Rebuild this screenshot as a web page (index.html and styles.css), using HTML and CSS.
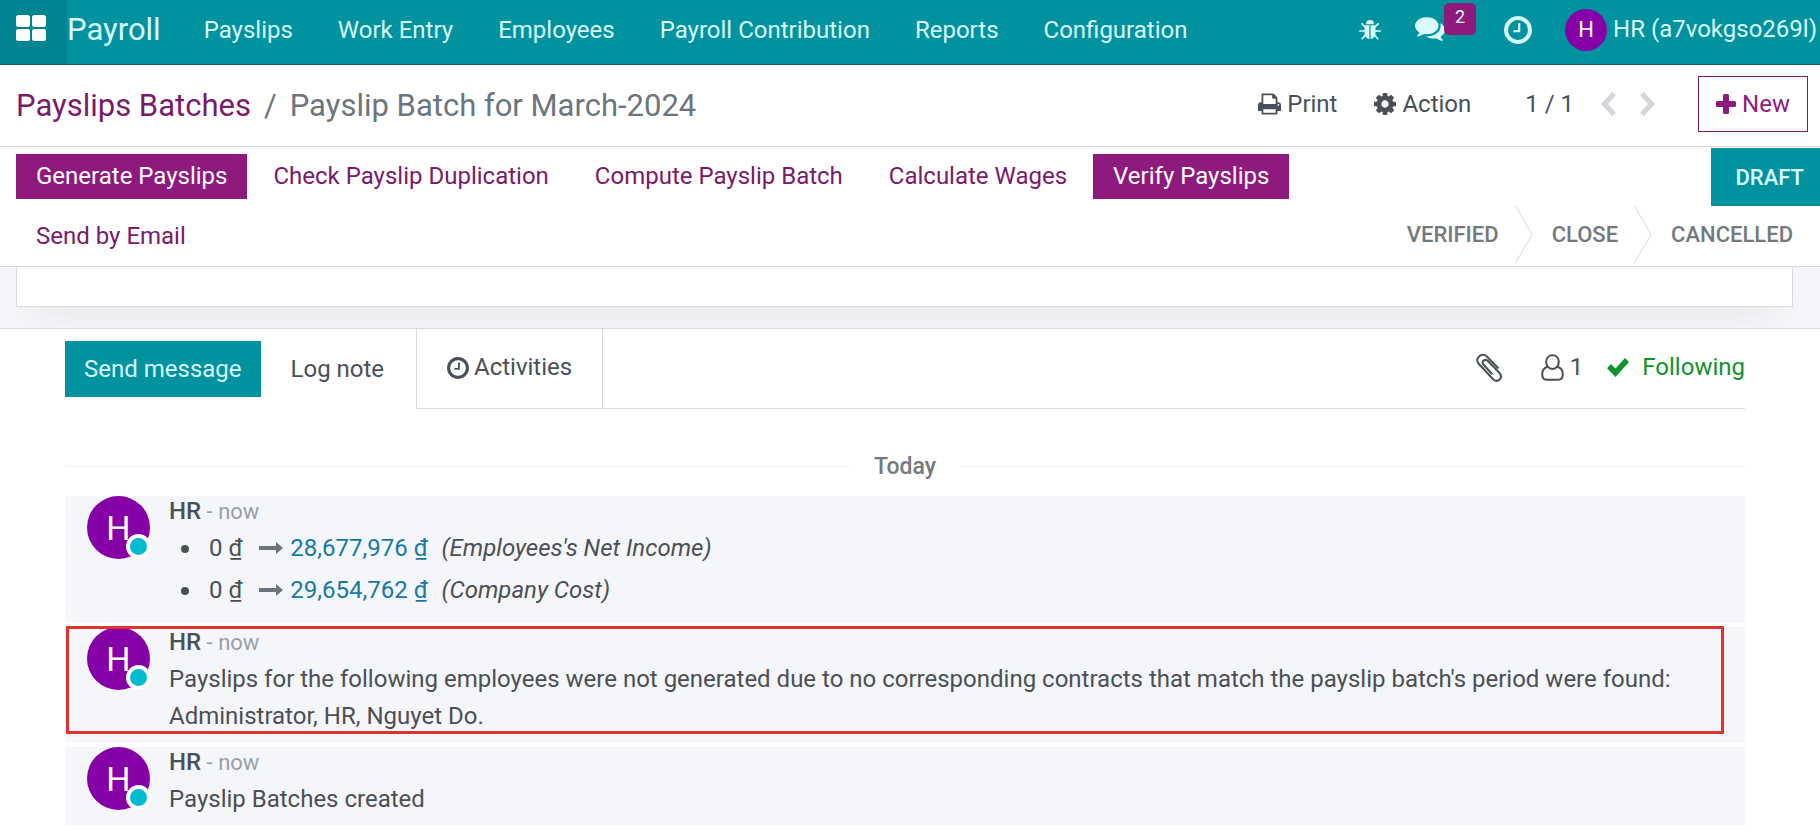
FILE: index.html
```html
<!DOCTYPE html>
<html lang="en">
<head>
<meta charset="utf-8">
<title>Payslip Batch for March-2024</title>
<link rel="stylesheet" href="styles.css">
</head>
<body>
<svg class="sprite" aria-hidden="true">
  <symbol id="i-clock" viewBox="0 0 1536 1536"><path d="M896 416v448q0 14-9 23t-23 9H544q-14 0-23-9t-9-23v-64q0-14 9-23t23-9h224V416q0-14 9-23t23-9h64q14 0 23 9t9 23zm416 352q0-148-73-273t-198-198-273-73-273 73-198 198-73 273 73 273 198 198 273 73 273-73 198-198 73-273zm224 0q0 209-103 385.500T1153.500 1433 768 1536t-385.500-103T103 1153.500 0 768t103-385.500T382.500 103 768 0t385.500 103T1433 382.500 1536 768z"/></symbol>
</svg>
<header class="navbar">
  <button class="apps" aria-label="Home menu"><svg viewBox="0 0 30 26" width="30" height="26"><rect width="14" height="12" rx="2.500"/><rect x="16" width="14" height="12" rx="2.500"/><rect y="14" width="14" height="12" rx="2.500"/><rect x="16" y="14" width="14" height="12" rx="2.500"/></svg></button>
  <a class="brand" href="#">Payroll</a>
  <nav class="menu">
    <a href="#">Payslips</a><a href="#">Work Entry</a><a href="#">Employees</a><a href="#">Payroll Contribution</a><a href="#">Reports</a><a href="#">Configuration</a>
  </nav>
  <div class="systray">
    <button aria-label="Debug"><svg viewBox="0 0 24 24" width="24" height="24"><path d="M8 6.200a4 4.200 0 0 1 8 0z"/><path d="M6.500 7.300h4.900V21a5.400 5.400 0 0 1-4.900-5.400zM12.600 7.300h4.900v8.300a5.400 5.400 0 0 1-4.900 5.400z"/><path class="stroke" d="M7 9 3.500 5.300M17 9l3.500-3.700M7 13H1.200M17 13h5.800M7.500 17l-3.700 4.200M16.500 17l3.700 4.200"/></svg></button>
    <button class="chat" aria-label="Messages"><svg viewBox="0 0 1792 1536" width="30" height="26"><path d="M1408 512q0 139-94 257t-256.500 186.500T704 1024q-86 0-176-16-124 88-278 128-36 9-86 16h-3q-11 0-20.500-8t-11.500-21q-1-3-1-6.500t.5-6.500 2-6l2.500-5 3.500-5.500 4-5 4.500-5 4-4.500q5-6 23-25t26-29.500 22.500-29 25-38.500 20.500-44q-124-72-195-177T0 512q0-139 94-257T350.500 68.500 704 0t353.500 68.500T1314 255t94 257zm384 256q0 120-71 224.500T1526 1169q10 24 20.500 44t25 38.500 22.500 29 26 29.500 23 25q1 1 4 4.500t4.500 5 4 5 3.500 5.500l2.500 5 2 6 .5 6.500-1 6.500q-3 14-13 22t-22 7q-50-7-86-16-154-40-278-128-90 16-176 16-271 0-472-132 58 4 88 4 161 0 309-45t264-129q125-92 192-212t67-254q0-77-23-152 129 71 204 178t75 230z"/></svg><span class="badge">2</span></button>
    <button class="act" aria-label="Activities"><svg width="28" height="28"><use href="#i-clock"/></svg></button>
    <button class="user"><span class="initial">H</span>HR (a7vokgso269l)</button>
  </div>
</header>

<section class="control">
  <nav class="crumbs"><a href="#">Payslips Batches</a><span class="sep">/</span><span>Payslip Batch for March-2024</span></nav>
  <div class="tools">
    <button><svg viewBox="0 0 1664 1536" width="23" height="22"><path d="M384 1408h896v-256H384v256zm0-640h896V384h-160q-40 0-68-28t-28-68V128H384v640zm1152 64q0-26-19-45t-45-19-45 19-19 45 19 45 45 19 45-19 19-45zm128 0v416q0 13-9.500 22.500t-22.500 9.500h-224v160q0 40-28 68t-68 28H352q-40 0-68-28t-28-68v-160H32q-13 0-22.500-9.500T0 1248V832q0-79 56.500-135.500T192 640h64V96q0-40 28-68t68-28h672q40 0 88 20t76 48l152 152q28 28 48 76t20 88v256h64q79 0 135.500 56.500T1664 832z"/></svg>Print</button>
    <button class="action"><svg viewBox="0 0 1536 1536" width="22" height="22"><path d="M1024 768q0-106-75-181t-181-75-181 75-75 181 75 181 181 75 181-75 75-181zm512-109v222q0 12-8 23t-20 13l-185 28q-19 54-39 91 35 50 107 138 10 12 10 25t-9 23q-27 37-99 108t-94 71q-12 0-26-9l-138-108q-44 23-91 38-16 136-29 186-7 28-36 28H657q-14 0-24.500-8.500T621 1506l-28-184q-49-16-90-37l-141 107q-10 9-25 9-14 0-25-11-126-114-165-168-7-10-7-23 0-12 8-23 15-21 51-66.500t54-70.500q-27-50-41-99L29 913q-13-2-21-12.500T0 877V655q0-12 8-23t19-13l186-28q14-46 39-92-40-57-107-138-10-12-10-24 0-10 9-23 26-36 98.500-107.500T337 135q13 0 26 10l138 107q44-23 91-38 16-136 29-186 7-28 36-28h222q14 0 24.500 8.500T915 30l28 184q49 16 90 37l142-107q9-9 24-9 13 0 25 10 129 119 165 170 7 8 7 22 0 12-8 23-15 21-51 66.500t-54 70.500q26 50 41 98l183 28q13 2 21 12.500t8 23.500z"/></svg>Action</button>
    <span class="pager">1 / 1</span>
    <button class="step" aria-label="Previous"><svg viewBox="0 0 16 26" width="16" height="26"><path d="m14 2.500-9.500 10.500 9.500 10.500"/></svg></button>
    <button class="step" aria-label="Next"><svg viewBox="0 0 16 26" width="16" height="26"><path d="M2 2.500 11.500 13 2 23.500"/></svg></button>
    <button class="new"><svg viewBox="0 0 20 20" width="20" height="20"><path d="M7 1.500A1.500 1.500 0 0 1 8.500 0h3A1.500 1.500 0 0 1 13 1.500V7h5.500A1.500 1.500 0 0 1 20 8.500v3a1.500 1.500 0 0 1-1.500 1.500H13v5.500a1.500 1.500 0 0 1-1.500 1.500h-3A1.500 1.500 0 0 1 7 18.500V13H1.500A1.500 1.500 0 0 1 0 11.500v-3A1.500 1.500 0 0 1 1.500 7H7z"/></svg>New</button>
  </div>
</section>

<section class="statusbar">
  <div class="buttons">
    <button class="primary">Generate Payslips</button><button>Check Payslip Duplication</button><button>Compute Payslip Batch</button><button>Calculate Wages</button><button class="primary">Verify Payslips</button><button>Send by Email</button>
  </div>
  <div class="stages">
    <button class="current">DRAFT</button>
    <div class="rest">
      <button>VERIFIED</button>
      <svg class="arrow" viewBox="0 0 18 57" width="18" height="57"><path d="M.5 0 17 28.500.5 57"/></svg>
      <button>CLOSE</button>
      <svg class="arrow" viewBox="0 0 18 57" width="18" height="57"><path d="M.5 0 17 28.500.5 57"/></svg>
      <button>CANCELLED</button>
    </div>
  </div>
</section>

<div class="sheet-bg"><div class="sheet"></div></div>

<main class="chatter">
  <div class="topbar">
    <div class="compose"><button class="send">Send message</button><button class="note">Log note</button></div>
    <button class="activities"><svg width="22" height="22"><use href="#i-clock"/></svg>Activities</button>
    <div class="follow">
      <button aria-label="Attachments"><svg class="clip" viewBox="0 0 28 30" width="28" height="30"><path d="M23.500 15.500 11.700 3.200C6.500-.8-.6 5.400 3.700 10.800l14.600 15.600c4.500 3.800 10-1.400 6.600-6L12.700 7.800C9.500 5.200 6 9 8.500 11.800l8.800 9.400"/></svg></button>
      <button class="people" aria-label="Followers"><svg class="person" viewBox="0 0 23 27" width="23" height="27"><path d="M11.500 1.200c3.800 0 6.300 3 6.300 6.800s-2.500 7-6.300 7-6.300-3.200-6.300-7 2.500-6.800 6.300-6.800zM6.500 12.700C3 13.700 1.200 16.500 1.200 20.500c0 3.600 1.500 5.200 4.500 5.200h11.600c3 0 4.500-1.600 4.500-5.200 0-4-1.800-6.800-5.300-7.800"/></svg>1</button>
      <button class="following"><svg viewBox="0 0 22 19" width="22" height="19"><path d="m0 10.200 4-4.200 4.500 4.500L18 0l4 4L8.500 19z"/></svg>Following</button>
    </div>
  </div>
  <div class="day">Today</div>
  <article class="msg">
    <div class="avatar">H<i></i></div>
    <div class="body">
      <div class="meta"><b>HR</b> - now</div>
      <ul>
        <li><span class="old">0 ₫</span><svg viewBox="0 0 24 14" width="24" height="14"><path d="M0 5h17V1l7 6-7 6V9H0z"/></svg><span class="val">28,677,976 ₫</span><em>(Employees's Net Income)</em></li>
        <li><span class="old">0 ₫</span><svg viewBox="0 0 24 14" width="24" height="14"><path d="M0 5h17V1l7 6-7 6V9H0z"/></svg><span class="val">29,654,762 ₫</span><em>(Company Cost)</em></li>
      </ul>
    </div>
  </article>
  <article class="msg marked">
    <div class="avatar">H<i></i></div>
    <div class="body">
      <div class="meta"><b>HR</b> - now</div>
      <p>Payslips for the following employees were not generated due to no corresponding contracts that match the payslip batch's period were found: Administrator, HR, Nguyet Do.</p>
    </div>
  </article>
  <article class="msg">
    <div class="avatar">H<i></i></div>
    <div class="body">
      <div class="meta"><b>HR</b> - now</div>
      <p>Payslip Batches created</p>
    </div>
  </article>
</main>
</body>
</html>
```
FILE: styles.css
```css
* { box-sizing: border-box; }
body { margin: 0; font: 24px/37px Roboto, "Noto Sans", sans-serif; color: #495057; background: #fff; }
button { font: inherit; color: inherit; background: none; border: 0; border-radius: 0; padding: 0; display: flex; align-items: center; white-space: nowrap; }
a { color: inherit; text-decoration: none; }
svg { fill: currentColor; flex: none; }
.sprite { display: none; }

.navbar { display: flex; align-items: stretch; height: 65px; background: #00929f; border-bottom: 1px solid #1c5a60; color: #d9fbfd; white-space: nowrap; }
.apps { width: 67px; padding: 0 0 9px 16px; background: #018491; color: #fff; }
.brand { font-size: 31px; line-height: 60px; }
.menu { display: flex; gap: 45px; margin-left: 43px; line-height: 60px; }
.systray { display: flex; align-items: center; margin-left: auto; padding: 0 3px 5px 0; }
.systray .stroke { fill: none; stroke: currentColor; stroke-width: 1.700; }
.chat { position: relative; margin-left: 33px; }
.badge { position: absolute; left: 29px; top: -14px; width: 32px; height: 32px; border-radius: 5px; background: #8f1a7d; font-size: 18px; line-height: 27px; text-align: center; }
.act { margin-left: 59px; }
.user { margin-left: 33px; gap: 6px; }
.initial { width: 42px; height: 42px; border-radius: 50%; background: #8500a6; color: #fff; font-size: 22px; line-height: 42px; }

.control { display: flex; justify-content: space-between; align-items: flex-start; padding: 11px 12px 10px 16px; border-bottom: 1px solid #d8dadd; }
.crumbs { font-size: 31px; line-height: 60px; color: #6c757d; }
.crumbs a { color: #7a1a6a; }
.sep { margin: 0 13px; }
.tools { display: flex; align-items: center; white-space: nowrap; }
.tools button { gap: 6px; }
.tools .action { margin-left: 37px; }
.pager { margin: 0 26px 0 54px; }
.tools .step + .step { margin-left: 24px; }
.step svg { fill: none; stroke: #d4d6db; stroke-width: 5; }
.tools .new { margin-left: 42px; height: 56px; padding: 0 17px; border: 1px solid #7a1a6a; color: #8f1a7d; }

.statusbar { display: flex; justify-content: space-between; height: 120px; border-bottom: 1px solid #d8dadd; }
.buttons { display: flex; flex-wrap: wrap; align-content: flex-start; gap: 15px 6px; flex: 0 1 1340px; padding: 7px 0 0 16px; }
.buttons button { height: 45px; padding: 0 20px; color: #7a1a6a; }
.buttons .primary { background: #8f1a7d; color: #fff; }
.stages { display: flex; flex-direction: column; align-items: flex-end; padding-top: 1px; font-size: 22px; font-weight: 500; color: #74797e; }
.current { height: 58px; padding: 0 16px 0 24px; background: #00929f; color: #d9fbfd; }
.rest { display: flex; height: 57px; padding-right: 27px; }
.arrow { margin: 0 19px 0 16px; fill: none; stroke: #d8dadd; }

.sheet-bg { height: 62px; padding: 0 27px 0 16px; background: #f5f6fa; border-bottom: 1px solid #d8dadd; overflow: hidden; }
.sheet { height: 40px; background: #fff; border: 1px solid #d8dadd; border-top: 0; box-shadow: 0 16px 32px -16px rgba(0,0,0,.2); }

.chatter { padding: 0 75px 12px 65px; }
.topbar { display: flex; height: 80px; }
.compose { display: flex; padding-top: 12px; width: 351px; }
.compose button { height: 56px; }
.send { padding: 0 19px; background: #00929f; color: #d9fbfd; }
.note { margin-left: 30px; }
.activities { gap: 5px; padding: 0 30px 2px; border: 1px solid #d8dadd; border-top: 0; }
.follow { flex: 1; display: flex; justify-content: flex-end; align-items: center; padding-bottom: 2px; border-bottom: 1px solid #d8dadd; }
.clip, .person { fill: none; stroke: currentColor; stroke-width: 2; }
.people { margin: 0 24px 0 38px; gap: 6px; }
.following { gap: 13px; color: #11932c; }
.day { display: flex; align-items: center; gap: 24px; margin: 39px 0 11px; font-size: 23px; font-weight: 500; color: #74797e; }
.day::before, .day::after { content: ""; flex: 1; border-top: 1px solid #f0f1f3; }
.msg { position: relative; display: flex; gap: 19px; margin-bottom: 5px; padding: 0 22px 7px; background: #f5f6fa; color: #4c4f53; }
.avatar { position: relative; flex: none; width: 63px; height: 63px; border-radius: 50%; background: #8500a6; color: #fff; font-size: 34px; line-height: 64px; text-align: center; }
.avatar i { position: absolute; right: -1px; bottom: 0; width: 25px; height: 25px; border: 4px solid #fff; border-radius: 50%; background: #00bccf; }
.body { flex: 1; }
.meta { font-size: 22px; line-height: 30px; color: #9b9fa4; }
.meta b { font-size: 24px; font-weight: 500; color: #495057; }
.body p { margin: 3px 0 0; }
.body ul { margin: 0 0 4px; padding: 0 0 0 12px; list-style: none; }
.body li { display: flex; align-items: center; line-height: 42px; }
.body li::before { content: ""; width: 8px; height: 8px; margin: 2px 20px 0 0; border-radius: 50%; background: currentColor; }
.body li svg { margin: 0 7px 0 17px; color: #6c757d; }
.val { color: #1579a5; }
.body em { margin-left: 14px; }
.marked::after { content: ""; position: absolute; inset: -1px 21px 8px 1px; border: 3px solid #e03232; }
```
